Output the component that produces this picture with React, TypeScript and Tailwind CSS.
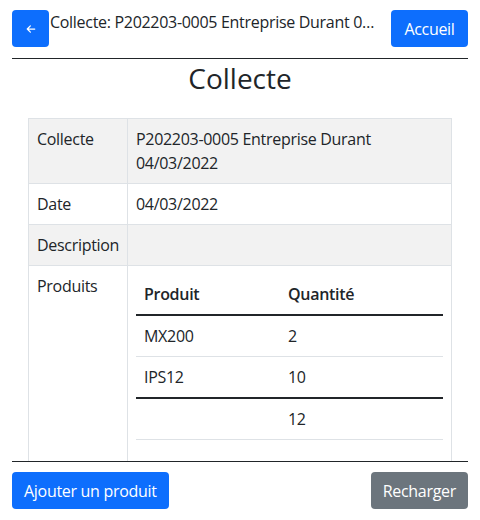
import React from "react";

export default function App() {
  const font = { fontFamily: '"Open Sans", "Noto Sans", sans-serif' };
  return (
    <div className="w-[480px] h-[520px] flex flex-col bg-white text-[#212529] text-[16px] leading-6 tracking-[-0.3px] overflow-hidden" style={font}>
      <div className="px-3 pt-[10px] flex items-start shrink-0">
        <button className="w-[37px] h-[37px] rounded-[4px] bg-[#0d6efd] text-white flex items-center justify-center shrink-0">
          <svg width="10" height="10" viewBox="0 0 16 16" fill="none" stroke="white" strokeWidth="2" strokeLinecap="round" strokeLinejoin="round">
            <path d="M14 8H2M7 3L2 8l5 5" />
          </svg>
        </button>
        <div className="flex-1 min-w-0 truncate pl-[1px] pr-2">Collecte: P202203-0005 Entreprise Durant 04/03/2022</div>
        <button className="h-[37px] w-[77px] rounded-[4px] bg-[#0d6efd] text-white shrink-0">Accueil</button>
      </div>
      <div className="mx-3 mt-[11px] border-t border-[#212529] shrink-0" />
      <div className="flex-1 min-h-0 overflow-hidden">
        <h3 className="text-center text-[28px] leading-[34px] font-normal tracking-normal mt-[2px]">Collecte</h3>
        <div className="px-7 mt-[23px]">
          <table className="w-full border-collapse table-fixed">
            <colgroup>
              <col className="w-[99px]" />
              <col />
            </colgroup>
            <tbody>
              <tr className="bg-[#f2f2f2]">
                <td className="border border-[#dee2e6] p-2 align-top">Collecte</td>
                <td className="border border-[#dee2e6] p-2 align-top">P202203-0005 Entreprise Durant 04/03/2022</td>
              </tr>
              <tr>
                <td className="border border-[#dee2e6] p-2 align-top">Date</td>
                <td className="border border-[#dee2e6] p-2 align-top">04/03/2022</td>
              </tr>
              <tr className="bg-[#f2f2f2]">
                <td className="border border-[#dee2e6] p-2 align-top h-[41px]">Description</td>
                <td className="border border-[#dee2e6] p-2 align-top"></td>
              </tr>
              <tr>
                <td className="border border-[#dee2e6] p-2 align-top">Produits</td>
                <td className="border border-[#dee2e6] p-2 pb-6 align-top">
                  <table className="w-full border-collapse table-fixed">
                    <colgroup>
                      <col className="w-[144px]" />
                      <col />
                    </colgroup>
                    <thead>
                      <tr className="border-b-2 border-[#212529]">
                        <th className="text-left font-semibold p-2">Produit</th>
                        <th className="text-left font-semibold p-2">Quantité</th>
                      </tr>
                    </thead>
                    <tbody>
                      <tr className="border-b border-[#dee2e6]">
                        <td className="p-2">MX200</td>
                        <td className="p-2">2</td>
                      </tr>
                      <tr>
                        <td className="p-2">IPS12</td>
                        <td className="p-2">10</td>
                      </tr>
                    </tbody>
                    <tfoot>
                      <tr className="border-t-2 border-b border-t-[#212529] border-b-[#dee2e6]">
                        <td className="p-2"></td>
                        <td className="p-2">12</td>
                      </tr>
                    </tfoot>
                  </table>
                </td>
              </tr>
            </tbody>
          </table>
        </div>
      </div>
      <div className="mx-3 border-t border-[#212529] shrink-0" />
      <div className="px-3 pt-[10px] pb-[11px] flex justify-between shrink-0">
        <button className="h-[37px] px-3 rounded-[4px] bg-[#0d6efd] text-white">Ajouter un produit</button>
        <button className="h-[37px] px-3 rounded-[4px] bg-[#6c757d] text-white">Recharger</button>
      </div>
    </div>
  );
}
